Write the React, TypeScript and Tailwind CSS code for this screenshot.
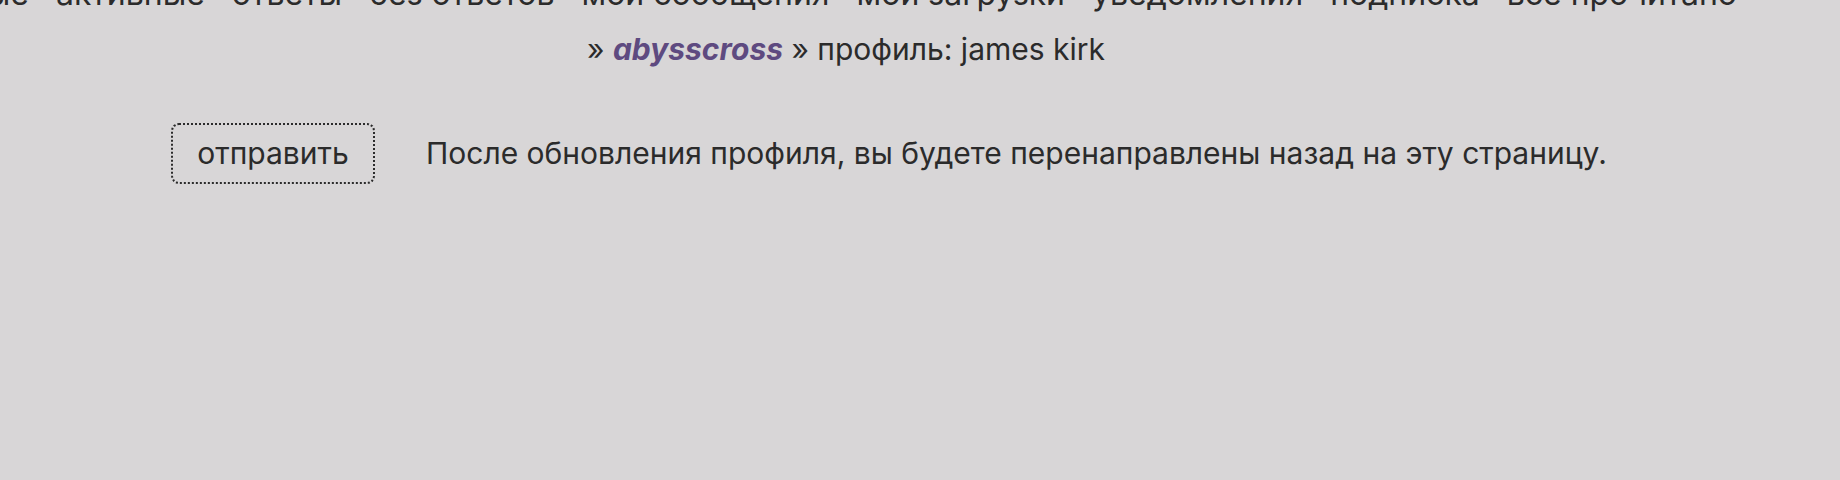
const navItems = [
  "новые",
  "активные",
  "ответы",
  "без ответов",
  "мои сообщения",
  "мои загрузки",
  "уведомления",
  "подписка",
  "всё прочитано",
];

export default function App() {
  return (
    <div className="h-[480px] w-[1840px] overflow-hidden bg-[#d8d6d7] font-['Inter','Noto_Sans',sans-serif] text-[#2b2b2b]">
      <nav className="-mt-[24px] flex justify-end gap-[27px] whitespace-nowrap pr-[103px] text-[32px] leading-[36px]">
        {navItems.map((item) => (
          <a key={item} className="shrink-0">
            {item}
          </a>
        ))}
      </nav>

      <div className="mt-[19px] pl-[587px] text-[30px] leading-[36px]">
        » <a className="font-bold italic text-[#5e4a80]">abysscross</a> » профиль: james kirk
      </div>

      <form className="mt-[56px] flex items-center pl-[171px]">
        <button
          type="button"
          className="h-[61px] w-[204px] rounded-lg border-2 border-dotted border-[#2b2b2b] text-[30px]"
        >
          отправить
        </button>
        <p className="ml-[51px] text-[30px]">
          После обновления профиля, вы будете перенаправлены назад на эту страницу.
        </p>
      </form>
    </div>
  );
}
